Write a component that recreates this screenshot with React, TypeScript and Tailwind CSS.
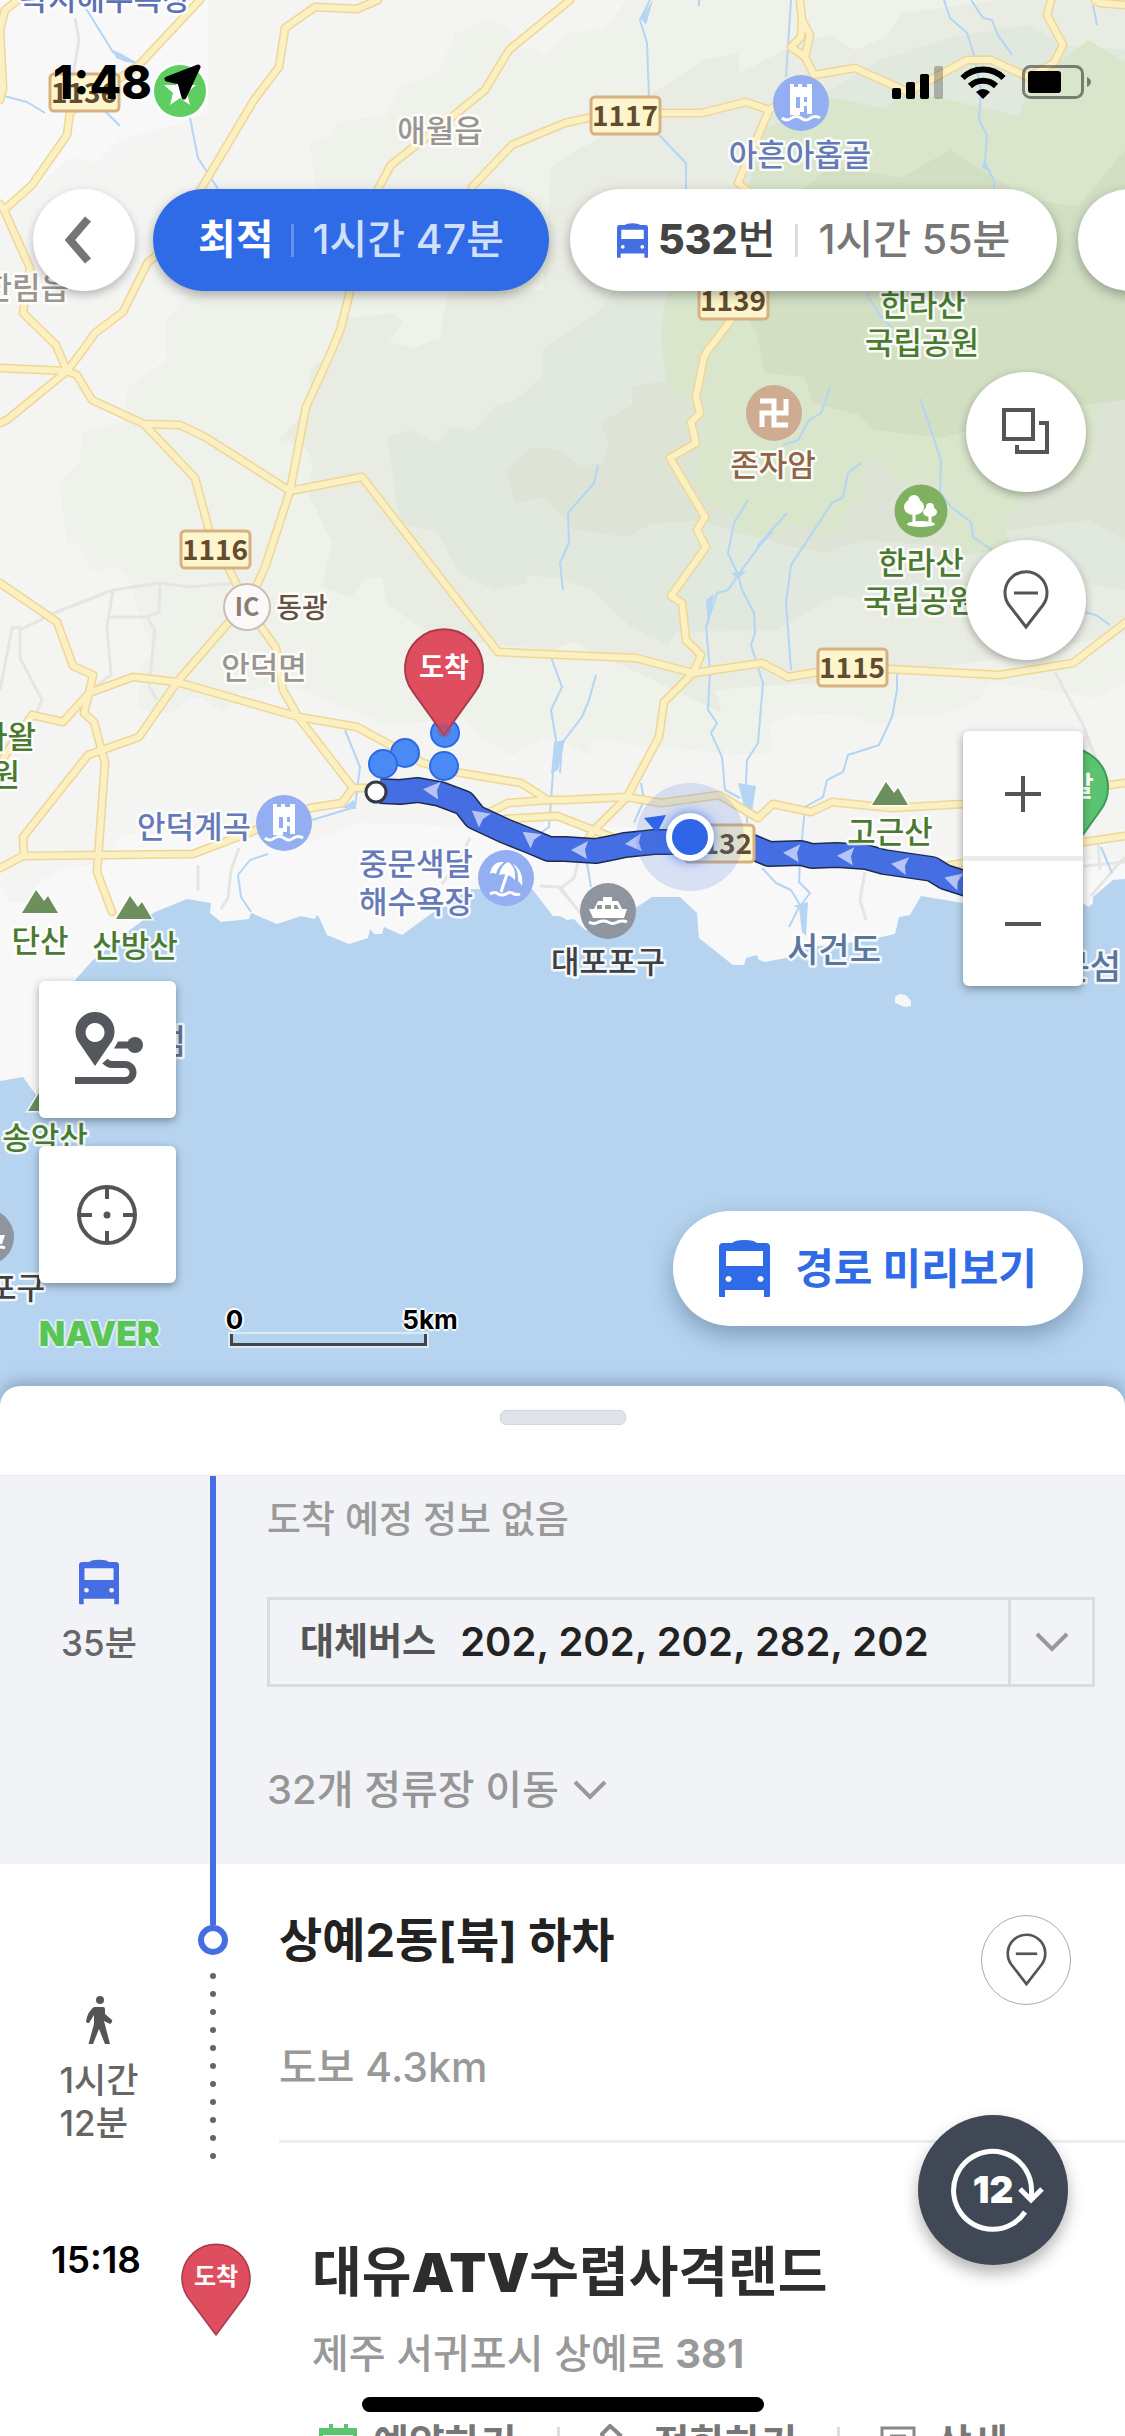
import type { ReactNode } from 'react';

const AREAS = [
    { fill: '#f4f4f2', points: '208,0 1125,0 1125,860 900,856 760,846 720,832 600,826 560,820 490,834 430,825 360,823 312,842 180,832 120,835 108,862 60,870 42,880 25,902 9,902 0,885 0,215 43,182 70,158 98,162 120,140 175,125 208,112' },
    { fill: '#eef2ea', points: '486,21 456,33 438,72 400,87 386,115 337,122 332,135 310,142 315,189 240,250 184,300 166,320 167,360 128,387 124,422 83,433 79,462 59,483 67,543 77,544 92,570 120,568 131,583 144,630 155,650 139,667 139,709 170,714 189,698 202,698 223,713 238,693 285,683 387,725 465,718 480,738 512,755 544,738 565,742 589,755 594,738 636,745 693,750 747,755 773,752 769,725 794,713 852,715 881,727 893,717 938,717 978,700 989,683 1046,690 1097,698 1125,683 1125,0 627,0 603,30 571,32 544,55 533,48 513,50 510,27' },
    { fill: '#e8ece2', points: '1000,0 902,13 886,37 855,50 830,35 800,42 740,73 738,53 704,60 650,95 596,140 560,160 551,167 543,290 447,293 440,338 414,348 389,342 404,322 393,313 335,320 340,347 310,370 310,407 279,440 303,443 312,460 310,497 332,543 322,587 351,597 366,578 382,578 388,605 436,638 551,650 574,642 632,670 722,713 715,690 776,685 823,683 1003,658 1125,633 1125,0' },
    { fill: '#e1e8dd', points: '542,350 542,377 515,400 494,407 476,430 450,427 438,443 411,430 387,437 400,523 438,533 458,573 494,590 526,583 528,575 565,580 592,590 632,628 668,645 676,632 776,630 837,595 900,606 1010,572 1125,590 1125,50 1065,45 1028,25 953,37 880,60 830,90 760,120 740,190 640,250 600,310' },
    { fill: '#dde4d5', points: '668,380 632,387 632,405 600,423 609,443 603,463 580,466 560,450 531,447 506,470 515,503 545,497 574,530 628,537 650,524 700,520 737,533 794,547 823,553 863,540 944,546 1010,530 1090,520 1125,540 1125,300 668,300' },
    { fill: '#d9e6cb', points: '1088,40 1125,62 1125,400 1100,403 1092,466 1028,490 1004,528 1012,548 960,556 944,540 950,493 920,477 900,484 874,453 859,480 866,497 848,503 843,532 819,533 794,523 773,537 740,532 728,510 708,507 693,483 706,433 704,397 668,393 661,337 665,300 690,250 749,190 758,133 828,97 884,108 910,92 938,97 1018,116 1030,84' },
    { fill: '#d2dfc3', points: '760,230 830,165 900,178 950,150 1030,200 1078,206 1125,150 1125,400 1040,410 942,438 874,430 859,415 812,403 805,377 765,373 756,330 740,310' },
];

const MINOR_ROADS = [
    'M75 18 L79 40 L73 75',
    'M0 690 L12 628 L20 627 L20 658 L42 700 L30 728 L0 748',
    'M20 630 L54 613 L113 590 L160 583 L190 587 L235 583',
    'M160 583 L159 612 L147 617 L155 630 L149 686 L157 700',
    'M113 590 L107 627 L111 675 L90 691',
    'M147 617 L110 617',
    'M198 865 V891',
    'M239 848 L231 870 L228 898 L221 909',
    'M1055 672 L1083 725 L1098 765 L1105 800',
    'M865 872 L860 900 L866 920',
    'M470 838 L460 858 L442 884',
    'M578 862 L574 878 L560 889 L585 918',
    'M540 886 L560 887 L570 900',
    'M1091 896 L1120 862 L1125 858',
    'M1084 866 L1125 862',
    'M1098 840 L1100 870',
];

const STREAMS = [
    'M85 7 L113 52 L135 63',
    'M4 96 L27 102 L45 113',
    'M190 118 L198 158 L218 189',
    'M106 112 L120 126',
    'M650 0 L640 20 L647 43 L649 97',
    'M659 135 L686 163 V189',
    'M699 0 V6',
    'M791 0 L786 77',
    'M944 0 L950 18 L967 33 L974 55 L981 90 L979 120 L987 135 L985 163 L994 180 V192',
    'M971 0 L983 18 L992 20 L998 35 L1012 55',
    'M1093 5 L1097 25',
    'M866 293 L880 315 L892 328',
    'M598 465 L594 483 L568 513 L569 542 L560 563 L563 590',
    'M830 388 L821 413 L809 420 L798 440 L783 445',
    'M920 398 L941 460 L940 492 L951 507 L971 522 L973 537 L992 550',
    'M861 463 L848 473 L843 497 L832 503 L791 565 L786 603 L791 670',
    'M748 500 L734 523 L728 553 L738 575 L728 590 L717 593 L706 627 L710 670 L708 710 L717 723 L711 733 L722 757 L725 790 L740 798',
    'M787 513 L769 533 L738 575 L742 590 L754 613 L755 633 L751 645 L763 683 L758 743 L747 760 L746 783 L747 823',
    'M897 665 L897 690 L892 717 L879 745 L848 755 L843 772 L827 780 L823 797 L805 807 L800 860 L799 882 L810 893 L801 905 L805 930',
    'M762 868 L776 883 L791 890 L800 905 L789 927',
    'M596 675 L589 700 L582 717 L562 743 L560 773',
    'M551 657 L562 687 L551 710 L556 740 L553 773 L549 827 L536 836',
    'M345 730 L360 767 L355 807 L312 820',
    'M268 854 L250 860 L238 875 L241 897 L251 912',
    'M641 783 L644 800 L634 823',
    'M587 863 L591 887',
    'M1101 847 L1112 873',
    'M1084 612 L1096 615 L1110 625',
];

const PONDS = [
    'M113 50 L122 54 L137 63 L126 62 L116 58Z',
    'M641 18 L653 0 L646 25Z',
    'M731 573 L746 571 L738 579Z',
    'M757 545 L771 530 L773 533 L757 549Z',
    'M554 742 L565 740 L558 770 L551 774Z',
    'M738 783 L756 786 L752 812 L744 806Z',
    'M342 808 L354 800 L356 809Z',
    'M793 906 L808 902 L806 936 L802 932 L799 908Z',
    'M984 160 L991 172 L982 168Z',
    'M706 600 L714 594 L708 626Z',
];

const ROADS = [
    'M200 0 L139 65 L70 112 L67 135 L32 185 L4 210 L30 268 L23 313 L56 345 L67 371',
    'M0 204 L4 210',
    'M18 0 L5 10 L0 30 L3 88 L0 100',
    'M378 0 L357 9 L315 7 L285 28 L279 67 L254 100 L201 189 L155 257 L148 262 L123 312 L95 333 L83 350 L67 371 L7 420 L0 423',
    'M0 368 L67 371 L77 375 L92 400 L144 424 L180 425 L205 437 L290 491 L362 477 L498 652 L565 655 L636 658 L693 673 L762 663 L788 677 L818 672 L888 669 L999 675 L1073 663 L1125 623',
    'M570 0 L509 50 L485 90 L452 117 L391 165 L378 189 L350 291 L341 328 L332 350 L306 407 L290 491 L265 567 L247 607',
    'M472 187 L512 145 L565 123 L592 117 L661 113 L702 113 L746 102 L769 110 L780 104',
    'M769 110 L764 122 L738 183 L760 200 L731 320 L708 350 L704 357 L696 397 L700 413 L691 422 L696 443 L670 458 L705 517 L697 530 L706 547 L671 596 L682 603 L686 640 L701 655 L693 673 L664 702 L659 737 L627 797 L592 832 L585 845',
    'M800 0 L802 20 L810 35 L805 57 L814 75 L855 68 L908 92 L967 60 L991 60 L1028 77 L1054 63 L1063 45 L1047 15 L1051 0',
    'M802 20 L801 37 L791 47 L805 57',
    'M1095 0 L1100 3 L1125 5',
    'M144 424 L195 478 L209 530 L236 583 L247 607 L276 648 L283 690 L299 718 L353 788 L372 788',
    'M353 788 L342 803 L310 808 L256 830 L193 854 L23 856 L0 868',
    'M247 607 L229 622 L177 682 L139 737 L88 755 L23 837 L24 856',
    'M0 583 L57 622 L73 666 L93 675 L89 693 L84 713 L94 722 L105 763 L97 872 L112 912',
    'M4 757 L32 715 L63 722 L89 693 L133 677 L177 682 L299 717 L357 727 L423 763 L461 773 L521 783 L548 800 L565 800 L627 797 L661 803 L719 795 L758 818 L773 804 L811 812 L832 802 L892 808 L963 804 L1125 783',
    'M490 812 L508 803 L548 800',
    'M505 819 L557 816 L614 838',
    'M940 867 L963 863 L1084 842 L1125 836',
];

const ROUTE =
    'M380 791 L400 792 L418 790 L440 794 L464 803 L475 817 L505 831 L530 841 L549 849 L565 849 L596 851 L616 847 L625 845 L654 842 L680 842 L750 846 L769 854 L801 853 L812 856 L837 855 L866 857 L884 862 L932 869 L945 877 L970 885';

const ROUTE_ARROWS: [number, number, number][] = [
    [432, 790, 5],
    [479, 816, 38],
    [530, 837, 35],
    [580, 850, 0],
    [634, 843, -6],
    [792, 853, 2],
    [846, 856, 2],
    [900, 865, 8],
    [953, 880, 16],
];

const SHIELDS: [number, number, string][] = [
    [49, 73, '1136'],
    [590, 96, '1117'],
    [698, 281, '1139'],
    [180, 530, '1116'],
    [817, 648, '1115'],
    [684, 824, '1132'],
];

const PLACES: { x: number; y: number; text: string; color: string; size?: number; end?: boolean }[] = [
    { x: 105, y: 10, text: '곽지해수욕장', color: '#5d70b3' },
    { x: 440, y: 142, text: '애월읍', color: '#999591' },
    { x: 69, y: 299, text: '한림읍', color: '#999591', end: true },
    { x: 264, y: 679, text: '안덕면', color: '#999591' },
    { x: 800, y: 166, text: '아흔아홉골', color: '#6679b8' },
    { x: 194, y: 838, text: '안덕계곡', color: '#6679b8' },
    { x: 416, y: 875, text: '중문색달', color: '#6679b8' },
    { x: 416, y: 913, text: '해수욕장', color: '#6679b8' },
    { x: 923, y: 316, text: '한라산', color: '#4a7a30' },
    { x: 922, y: 354, text: '국립공원', color: '#4a7a30' },
    { x: 921, y: 574, text: '한라산', color: '#4a7a30' },
    { x: 920, y: 612, text: '국립공원', color: '#4a7a30' },
    { x: 36, y: 748, text: '곶자왈', color: '#4a7a30', end: true },
    { x: 20, y: 786, text: '도립공원', color: '#4a7a30', end: true },
    { x: 40, y: 952, text: '단산', color: '#4a7a30' },
    { x: 135, y: 957, text: '산방산', color: '#4a7a30' },
    { x: 45, y: 1149, text: '송악산', color: '#4a7a30' },
    { x: 890, y: 843, text: '고근산', color: '#4a7a30' },
    { x: 773, y: 476, text: '존자암', color: '#8f6548' },
    { x: 302, y: 618, text: '동광', color: '#66503f', size: 28 },
    { x: 608, y: 973, text: '대포포구', color: '#3f4043' },
    { x: 45, y: 1299, text: '산이수동포구', color: '#3f4043', end: true },
    { x: 834, y: 962, text: '서건도', color: '#5c759b', size: 34 },
    { x: 1121, y: 979, text: '문섬', color: '#5c759b', size: 34, end: true },
    { x: 186, y: 1054, text: '형제섬', color: '#5c759b', size: 34, end: true },
];

const MOUNTAINS: [number, number][] = [
    [22, 890],
    [116, 896],
    [872, 782],
    [28, 1088],
];

function MapPin({ x, y, fill, stroke, label }: { x: number; y: number; fill: string; stroke: string; label: string }) {
    return (
        <g transform={`translate(${x} ${y})`}>
            <path
                d="M0 67 L-31 24 A39 39 0 1 1 31 24 Z"
                fill={fill}
                stroke={stroke}
                strokeWidth="2"
                strokeLinejoin="round"
            />
            <text y="9" textAnchor="middle" fontSize="27" fontWeight="700" fill="#fff">
                {label}
            </text>
        </g>
    );
}

function WaterfallMark({ x, y }: { x: number; y: number }) {
    return (
        <g transform={`translate(${x} ${y})`}>
            <circle r="28" fill="#94aef2" />
            <path
                d="M-11 -19 h4 v3 h4 v-3 h4 v3 h5 v-3 h5 v30 h-5 v-8 h-3 v6 h-4 v3 h-10z M-5 -6 v11 h4 v-11z M3 -6 v5 h3 v-5z"
                fill="#fff"
                fillRule="evenodd"
            />
            <path d="M-19 15 q5 4 9.500 0 q5 -3 9.500 0 q5 4 9.500 0 q5 -3 9.500 0" fill="none" stroke="#fff" strokeWidth="3" />
        </g>
    );
}

function FerryMark({ x, y }: { x: number; y: number }) {
    return (
        <g transform={`translate(${x} ${y})`}>
            <circle r="28" fill="#8e959e" />
            <path
                d="M-5 -14 h9 v4 h6 l4 8 h5 l-3 9 h-31 l-4 -9 h5 l4 -8 h5z M-11 -6 v4 h5 v-4z M-3 -6 v4 h6 v-4z M6 -6 v4 h5 l-2 -4z"
                fill="#fff"
                fillRule="evenodd"
            />
            <path d="M-19 11 q5 3 9.500 0 q5 -2 9.500 0 q5 3 9.500 0 q5 -2 9.500 0" fill="none" stroke="#fff" strokeWidth="3" />
        </g>
    );
}

function MapCanvas() {
    return (
        <svg
            className="absolute inset-x-0 top-0 h-[1436px] w-full font-['Noto_Sans_CJK_KR',sans-serif]"
            viewBox="0 0 1125 1436"
            preserveAspectRatio="xMidYMin slice"
            role="img"
            aria-label="지도"
        >
            <rect width="1125" height="1436" fill="#f8f8f8" />
            {AREAS.map((area) => (
                <polygon key={area.fill} points={area.points} fill={area.fill} />
            ))}

            {/* Sea */}
            <path
                d="M146 918 L155 912 L187 899 L211 903 L210 913 L221 922 L249 919 L251 913 L277 924 L301 916 L314 919 L318 915 L327 935 L349 944 L368 938 L370 929 L374 934 L382 934 L384 927 L402 935 L432 913 L470 889 L533 890 L553 916 L560 916 L567 920 L574 919 L585 930 L604 932 L628 913 L652 897 L680 897 L697 913 L699 938 L733 965 L744 965 L746 958 L757 955 L759 960 L765 962 L791 957 L800 948 L848 943 L881 937 L895 934 L899 917 L910 915 L921 896 L963 903 L1040 915 L1084 904 L1089 907 L1093 903 L1093 897 L1113 880 L1125 879 V1436 H0 V1081 L23 1077 L36 1095 L50 1060 L60 1010 L76 979 L92 961 L130 930 Z"
                fill="#b6d4f0"
            />
            <path d="M895 997 L899 994 L906 995 L911 1001 L911 1006 L905 1007 L895 1003Z" fill="#f5f6f6" />

            <g fill="none" stroke="#e5e5e3" strokeWidth="3" strokeLinejoin="round">
                {MINOR_ROADS.map((d) => (
                    <path key={d} d={d} />
                ))}
            </g>
            <g fill="none" stroke="#b4d5f3" strokeWidth="2" strokeLinejoin="round">
                {STREAMS.map((d) => (
                    <path key={d} d={d} />
                ))}
            </g>
            <g fill="#b4d5f3">
                {PONDS.map((d) => (
                    <path key={d} d={d} />
                ))}
            </g>
            <g fill="none" stroke="#f0d696" strokeWidth="9" strokeLinejoin="round" strokeLinecap="round">
                {ROADS.map((d) => (
                    <path key={d} d={d} />
                ))}
            </g>
            <g fill="none" stroke="#fbf0c1" strokeWidth="6" strokeLinejoin="round" strokeLinecap="round">
                {ROADS.map((d) => (
                    <path key={d} d={d} />
                ))}
            </g>

            {/* Bus route */}
            <g fill="none" strokeLinejoin="round">
                <path d={ROUTE} stroke="#1d2a52" strokeWidth="26" />
                <path d={ROUTE} stroke="#456ee2" strokeWidth="23" />
            </g>
            {ROUTE_ARROWS.map(([x, y, angle]) => (
                <path
                    key={x}
                    d="M-9 0 L8 -9 L5 0 L7 9 Z"
                    transform={`translate(${x} ${y}) rotate(${angle})`}
                    fill="#b5c4f5"
                />
            ))}

            {/* Road numbers */}
            {SHIELDS.map(([x, y, name]) => (
                <g key={name}>
                    <rect x={x + 1} y={y + 1} width="69" height="37" rx="4" fill="#fdf5cb" stroke="#d8b180" strokeWidth="3" />
                    <text x={x + 35} y={y + 30} textAnchor="middle" fontSize="28" fontWeight="700" fill="#624b2f">
                        {name}
                    </text>
                </g>
            ))}

            {/* Interchange */}
            <circle cx="247" cy="607" r="23" fill="#fbf9f8" stroke="#c9bdba" strokeWidth="2" />
            <text x="247" y="616" textAnchor="middle" fontSize="25" fontWeight="700" fill="#8d7c73">
                IC
            </text>

            {/* Place names */}
            <g stroke="#fff" strokeOpacity="0.85" strokeWidth="5" strokeLinejoin="round" fontWeight="500" paintOrder="stroke">
                {PLACES.map((place) => (
                    <text
                        key={`${place.text}-${place.y}`}
                        x={place.x}
                        y={place.y}
                        fontSize={place.size ?? 31}
                        fill={place.color}
                        textAnchor={place.end ? 'end' : 'middle'}
                    >
                        {place.text}
                    </text>
                ))}
            </g>
            {MOUNTAINS.map(([x, y]) => (
                <path
                    key={x}
                    d="M0 23 L14 0 L22 11 L26 6 L36 23 Z"
                    transform={`translate(${x} ${y})`}
                    fill="#6c8f5d"
                    stroke="#fff"
                    strokeWidth="3"
                    strokeOpacity="0.8"
                    paintOrder="stroke"
                />
            ))}

            {/* Sights */}
            <WaterfallMark x={801} y={103} />
            <WaterfallMark x={284} y={823} />
            <FerryMark x={608} y={911} />
            <FerryMark x={-14} y={1237} />
            <g transform="translate(506 878)">
                <circle r="28" fill="#94aef2" />
                <path d="M-16 -4 Q-14 -17 -2 -16 Q-9 -10 -10 -4 Q-13 -6 -16 -4Z M-7 -3 Q-5 -13 2 -16 Q10 -12 9 2 Q1 -6 -7 -3Z M6 -15 Q18 -8 16 8 Q14 4 12 3 Q13 -8 6 -15Z" fill="#fff" />
                <path d="M1 -4 L-5 14 M-16 16 q5 -3 8 0 q4 2 8 0 q4 -3 8 0 q4 1 6 0" fill="none" stroke="#fff" strokeWidth="3" />
            </g>
            <g transform="translate(774 413)">
                <circle r="28" fill="#cfab91" />
                <path d="M-14 -12 H0 V12 H14 M12 -14 V0 H-12 V14" fill="none" stroke="#fff" strokeWidth="5" />
            </g>
            <g transform="translate(921 511)">
                <circle r="26.500" fill="#80b160" />
                <ellipse cx="-7" cy="-4" rx="10" ry="8" fill="#fff" />
                <circle cx="-7" cy="-10" r="6" fill="#fff" />
                <ellipse cx="9" cy="1" rx="7" ry="5" fill="#fff" />
                <circle cx="9" cy="-4" r="4" fill="#fff" />
                <path d="M-7 2 V13 M9 4 V13" stroke="#fff" strokeWidth="3" />
                <ellipse cy="13" rx="14" ry="3" fill="#fff" />
            </g>
            <g transform="translate(180 91)">
                <circle r="28" fill="#fff" />
                <circle r="26" fill="#5fce62" />
                <path d="M0 -17 L4 -6 L16 -6 L7 2 L10 14 L0 7 L-10 14 L-7 2 L-16 -6 L-4 -6 Z" fill="#fff" />
            </g>

            {/* Stops, start and arrival */}
            <g fill="#4a8af5" stroke="#2d68e6" strokeWidth="2">
                <circle cx="405" cy="753" r="14" />
                <circle cx="383" cy="764" r="14" />
                <circle cx="444" cy="766" r="14" />
                <circle cx="445" cy="733" r="14" />
            </g>
            <circle cx="376" cy="792" r="10" fill="#fff" stroke="#333a45" strokeWidth="3" />
            <MapPin x={444} y={668} fill="#df4e5f" stroke="#a93a4a" label="도착" />
            <circle cx="444" cy="730" r="7" fill="#a0507f" fillOpacity="0.6" />
            <MapPin x={1069} y={787} fill="#5bc371" stroke="#3f9c58" label="출발" />

            {/* Current position */}
            <circle cx="690" cy="837" r="54" fill="#4a74e0" fillOpacity="0.18" />
            <path d="M644 818 L666 815 L657 833 Z" fill="#2f66e8" />
            <circle cx="690" cy="837" r="24" fill="#fff" className="drop-shadow-[0_0_6px_rgba(47,102,232,0.8)]" />
            <circle cx="690" cy="837" r="18" fill="#2f66e8" />
        </svg>
    );
}

function BusIcon({ className }: { className: string }) {
    return (
        <svg viewBox="0 0 51 57" className={className} fill="currentColor" aria-hidden="true">
            <path
                fillRule="evenodd"
                d="M4 3 H13 Q16 0 25.500 0 T38 3 H47 Q51 3 51 7 V56 Q51 57 50 57 H45 V50 H6 V57 H1 Q0 57 0 56 V7 Q0 3 4 3Z M7 11 V26 H44 V11Z M9.500 36 a3 3 0 1 0 .1 0Z M41.500 36 a3 3 0 1 0 .1 0Z"
            />
        </svg>
    );
}

function PinMinusIcon({ className }: { className: string }) {
    return (
        <svg viewBox="0 0 46 60" className={className} fill="none" stroke="#555" strokeWidth="3" aria-hidden="true">
            <path d="M23 57 L6 35 A21 21 0 1 1 40 35 Z" />
            <path d="M11 23 H35" />
        </svg>
    );
}

function ChevronDown() {
    return (
        <svg viewBox="0 0 34 20" className="h-5 w-[34px]" fill="none" stroke="#999" strokeWidth="4" aria-hidden="true">
            <path d="M2 2 L17 17 L32 2" />
        </svg>
    );
}

function StatusBar() {
    return (
        <div className="flex h-[164px] items-center justify-between pr-[34px] pl-[53px]">
            <div className="flex items-center gap-3">
                <span className="text-[46px] leading-none font-extrabold text-black">1:48</span>
                <svg viewBox="0 0 37 36" className="h-9 w-[37px]" aria-hidden="true">
                    <path d="M34 3 L3 15 L16 18 L20 33 Z" stroke="#000" strokeWidth="5" strokeLinejoin="round" />
                </svg>
            </div>
            <div className="flex items-center gap-4">
                <svg viewBox="0 0 52 33" className="h-[33px] w-[52px]" aria-hidden="true">
                    <rect y="22" width="9" height="11" rx="2" />
                    <rect x="14" y="16" width="9" height="17" rx="2" />
                    <rect x="28" y="8" width="9" height="25" rx="2" />
                    <rect x="42" width="9" height="33" rx="2" fillOpacity="0.25" />
                </svg>
                <svg viewBox="0 0 46 33" className="h-[33px] w-[46px]" fill="none" stroke="#000" strokeWidth="6" aria-hidden="true">
                    <path d="M2.500 12 A29 29 0 0 1 43.500 12" />
                    <path d="M10 20 A18.500 18.500 0 0 1 36 20" />
                    <path d="M16 26 Q23 20 30 26 L23 33Z" fill="#000" stroke="none" />
                </svg>
                <svg viewBox="0 0 69 34" className="h-[34px] w-[69px]" aria-hidden="true">
                    <rect x="1.500" y="1.500" width="59" height="31" rx="7" fill="none" stroke="#000" strokeOpacity="0.45" strokeWidth="3" />
                    <rect x="6" y="6" width="33" height="22" rx="3" />
                    <path d="M65 12 Q69 14 69 17 T65 22Z" fillOpacity="0.45" />
                </svg>
            </div>
        </div>
    );
}

function RouteTabs() {
    return (
        <nav className="mt-[25px] flex pl-[33px]">
            <button
                type="button"
                aria-label="뒤로"
                className="mr-[18px] flex size-[102px] shrink-0 items-center justify-center rounded-full bg-white shadow-[0_4px_10px_rgba(0,0,0,0.25)]"
            >
                <svg viewBox="0 0 28 48" className="mr-3 h-12 w-7" fill="none" stroke="#757575" strokeWidth="8">
                    <path d="M24 3 L6 24 L24 45" />
                </svg>
            </button>
            <button
                type="button"
                className="mr-[21px] flex h-[102px] shrink-0 items-center gap-[18px] rounded-full bg-[#2f6ae7] px-[45px] text-[41px] shadow-[0_4px_12px_rgba(0,0,0,0.3)]"
            >
                <span className="font-bold text-white">최적</span>
                <span className="h-[33px] w-[3px] bg-[#6391ee]" />
                <span className="font-medium text-[#d0dffa]">1시간 47분</span>
            </button>
            <button
                type="button"
                className="mr-[21px] flex h-[102px] shrink-0 items-center gap-[20px] rounded-full bg-white px-[47px] text-[41px] shadow-[0_4px_12px_rgba(0,0,0,0.3)]"
            >
                <span className="flex items-center gap-2.5 font-extrabold text-[#444]">
                    <BusIcon className="h-[35px] w-[31px] text-[#456ee2]" />
                    <span>
                        532<span className="font-medium">번</span>
                    </span>
                </span>
                <span className="h-[33px] w-[3px] bg-[#ddd]" />
                <span className="font-medium text-[#777]">1시간 55분</span>
            </button>
            <button
                type="button"
                aria-label="다음 경로"
                className="h-[102px] w-[400px] shrink-0 rounded-full bg-white shadow-[0_4px_12px_rgba(0,0,0,0.3)]"
            />
        </nav>
    );
}

function SquareButton({ label, children }: { label: string; children: ReactNode }) {
    return (
        <button
            type="button"
            aria-label={label}
            className="size-[137px] rounded-md bg-white shadow-[0_3px_8px_rgba(0,0,0,0.35)]"
        >
            {children}
        </button>
    );
}

function MapControls() {
    return (
        <div className="flex flex-1 justify-between">
            <div className="flex flex-col justify-end pb-10 pl-[39px]">
                <div className="flex flex-col gap-7">
                    <SquareButton label="경로">
                        <svg viewBox="0 0 137 137" fill="none" stroke="#54575c" strokeWidth="7">
                            <path
                                d="M56 85 L41 63 A19.500 19.500 0 1 1 71 63 Z M56 42 a9.500 9.500 0 1 0 .1 0Z"
                                fill="#54575c"
                                fillRule="evenodd"
                                stroke="none"
                            />
                            <circle cx="96" cy="64" r="8" fill="#54575c" stroke="none" />
                            <path d="M90 60.500 H79 L75 67.500 H90Z" fill="#54575c" stroke="none" />
                            <path d="M66 80 Q69 83.500 73 83.500 H86 A8 8 0 0 1 86 99.500 H36" />
                        </svg>
                    </SquareButton>
                    <SquareButton label="현재 위치">
                        <svg viewBox="0 0 137 137" fill="none" stroke="#555" strokeWidth="4">
                            <circle cx="68" cy="69" r="28" />
                            <path d="M68 41 V53 M68 85 V97 M40 69 H53 M84 69 H97" />
                            <circle cx="68" cy="69" r="3.500" fill="#555" stroke="none" />
                        </svg>
                    </SquareButton>
                </div>
                <div className="mt-[23px] flex items-end gap-[66px]">
                    <span className="text-[34px] leading-6 font-black text-[#59c653] [text-shadow:2px_0_0_#dcecf7,-2px_0_0_#dcecf7,0_2px_0_#dcecf7,0_-2px_0_#dcecf7]">
                        NAVER
                    </span>
                    <div>
                        <div className="flex w-[232px] justify-between text-[26px] leading-[28px] font-bold text-black [text-shadow:2px_0_1px_#fff,-2px_0_1px_#fff,0_2px_1px_#fff,0_-2px_1px_#fff]">
                            <span>0</span>
                            <span>5km</span>
                        </div>
                        <div className="ml-1 h-3 w-[197px] border-x-[3px] border-b-[3px] border-[#444] outline-2 outline-white/50" />
                    </div>
                </div>
            </div>

            <div className="flex flex-col items-end pt-[81px]">
                <div className="mr-[39px] flex flex-col gap-12">
                    <button type="button" aria-label="지도 유형" className="size-[120px] rounded-full bg-white shadow-[0_3px_8px_rgba(0,0,0,0.3)]">
                        <svg viewBox="0 0 120 120" fill="none" stroke="#555" strokeWidth="4">
                            <rect x="38" y="38" width="29" height="29" />
                            <path d="M73 51 H81 V80 H51 V73" />
                        </svg>
                    </button>
                    <button
                        type="button"
                        aria-label="거리뷰"
                        className="flex size-[120px] items-center justify-center rounded-full bg-white shadow-[0_3px_8px_rgba(0,0,0,0.3)]"
                    >
                        <PinMinusIcon className="h-[60px] w-[46px]" />
                    </button>
                </div>
                <div className="mt-[71px] mr-[42px] flex w-[120px] flex-col rounded-md bg-white shadow-[0_3px_8px_rgba(0,0,0,0.35)]">
                    <button type="button" aria-label="확대" className="flex h-[125px] items-center justify-center">
                        <svg viewBox="0 0 36 36" className="size-9" stroke="#555" strokeWidth="4">
                            <path d="M18 0 V36 M0 18 H36" />
                        </svg>
                    </button>
                    <div className="h-[5px] bg-[#ececec]" />
                    <button type="button" aria-label="축소" className="flex h-[125px] items-center justify-center">
                        <svg viewBox="0 0 36 36" className="size-9" stroke="#555" strokeWidth="4">
                            <path d="M0 18 H36" />
                        </svg>
                    </button>
                </div>
                <button
                    type="button"
                    className="mt-auto mr-[42px] mb-[60px] flex h-[115px] items-center gap-[25px] rounded-full bg-white px-[46px] text-[42px] font-bold text-[#2f6ae7] shadow-[0_10px_24px_rgba(60,90,120,0.45)]"
                >
                    <BusIcon className="h-[57px] w-[51px]" />
                    경로 미리보기
                </button>
            </div>
        </div>
    );
}

function BusStep() {
    return (
        <li className="flex border-t border-[#e6e7ea] bg-[#f1f3f7]">
            <div className="flex w-[198px] flex-col items-center pt-[83px] text-[35px] leading-[44px] font-medium text-[#666]">
                <BusIcon className="mb-[16px] h-[46px] w-10 text-[#456ee2]" />
                35분
            </div>
            <div className="flex w-[30px] justify-center">
                <div className="w-1.5 bg-[#456ee2]" />
            </div>
            <div className="mr-[30px] ml-[39px] flex-1 pt-[17px] pb-11">
                <p className="text-[37px] leading-[54px] font-medium text-[#9a9a9a]">도착 예정 정보 없음</p>
                <button type="button" className="mt-[50px] flex h-[90px] w-full items-stretch border-[3px] border-[#d9dbe0] text-left">
                    <span className="flex flex-1 items-center gap-[24px] pl-[30px]">
                        <span className="text-[37px] font-bold text-[#555]">대체버스</span>
                        <span className="text-[40px] font-semibold text-[#222]">202, 202, 202, 282, 202</span>
                    </span>
                    <span className="flex w-[84px] items-center justify-center border-l-[3px] border-[#d9dbe0]">
                        <ChevronDown />
                    </span>
                </button>
                <button type="button" className="mt-[73px] flex items-center gap-[14px] text-[40px] leading-[60px] font-medium text-[#969696]">
                    32개 정류장 이동
                    <ChevronDown />
                </button>
            </div>
        </li>
    );
}

function WalkStep() {
    return (
        <li className="flex">
            <div className="flex w-[198px] flex-col items-center pt-[132px] text-[35px] leading-[43px] font-medium text-[#666]">
                <svg viewBox="0 0 28 48" className="mb-[15px] h-12 w-7" fill="#555" aria-hidden="true">
                    <circle cx="15" cy="4" r="4" />
                    <path d="M9 11 H18 Q20 11 20 13 V18 L27 24 Q28 26 25 28 L19 25 L25 48 H20 L14 33 L8 48 H3.500 L9 28 V19 L4 27 Q1 27 1 25 Q3 15 9 11Z" />
                </svg>
                <p>
                    1시간
                    <br />
                    12분
                </p>
            </div>
            <div className="flex w-[30px] flex-col items-center">
                <div className="h-[61px] w-1.5 bg-[#456ee2]" />
                <div className="size-[30px] rounded-full border-[6px] border-[#456ee2] bg-white" />
                <div className="mt-[18px] flex flex-col gap-3">
                    {Array.from({ length: 11 }, (_, i) => (
                        <span key={i} className="size-1.5 rounded-full bg-[#666]" />
                    ))}
                </div>
            </div>
            <div className="ml-[51px] flex-1">
                <div className="flex justify-between">
                    <div className="pt-[46px]">
                        <h2 className="text-[47px] leading-[60px] font-bold text-[#222]">상예2동[북] 하차</h2>
                        <p className="mt-[69px] text-[41px] leading-[56px] font-medium text-[#999]">도보 4.3km</p>
                    </div>
                    <button
                        type="button"
                        aria-label="거리뷰"
                        className="mt-[51px] mr-[54px] flex size-[90px] items-center justify-center rounded-full border border-[#aaa]"
                    >
                        <PinMinusIcon className="h-[54px] w-[41px]" />
                    </button>
                </div>
                <div className="mt-[45px] h-[3px] bg-[#eee]" />
            </div>
        </li>
    );
}

function ArrivalStep() {
    return (
        <li className="flex">
            <time className="w-[181px] pt-[77px] pl-[51px] text-[37px] leading-[48px] font-semibold text-black">15:18</time>
            <svg viewBox="0 0 70 94" className="mt-[83px] h-[94px] w-[70px]">
                <path
                    d="M35 93 L6 54 A34 34 0 1 1 64 54 Z"
                    fill="#df4e5f"
                    stroke="#a93a4a"
                    strokeWidth="1.500"
                    strokeLinejoin="round"
                />
                <text x="35" y="43" textAnchor="middle" fontSize="24" fontWeight="700" fill="#fff">
                    도착
                </text>
            </svg>
            <div className="ml-[61px] pt-[81px]">
                <h2 className="text-[54px] leading-[66px] font-bold text-[#2d2d2d]">
                    대유<span className="font-black">ATV</span>수렵사격랜드
                </h2>
                <p className="mt-6 text-[40px] leading-[48px] font-medium text-[#999]">
                    제주 서귀포시 상예로 <span className="font-bold">381</span>
                </p>
                <div className="mt-[41px] flex items-center pl-[7px] text-[39px] leading-[48px] font-bold whitespace-nowrap text-[#777]">
                    <a href="#reserve" className="flex items-center gap-4">
                        <svg viewBox="0 0 38 38" className="size-[38px]" fill="none" stroke="#5ac46e" strokeWidth="4" aria-hidden="true">
                            <path d="M2 6 H36 V36 H2Z M2 9 H36 M12 0 V6 M27 0 V6" />
                        </svg>
                        예약하기
                    </a>
                    <span className="mx-10 h-8 w-[3px] bg-[#ddd]" />
                    <a href="#call" className="flex items-center gap-4">
                        <svg viewBox="0 0 38 38" className="size-[38px]" fill="none" stroke="#888" strokeWidth="4" aria-hidden="true">
                            <path d="M10 2 L20 11 L15 17 Q18 23 22 24 L28 19 L36 28 L30 35 Q10 34 2 10 Z" />
                        </svg>
                        전화하기
                    </a>
                    <span className="mx-10 h-8 w-[3px] bg-[#ddd]" />
                    <a href="#detail" className="flex items-center gap-5">
                        <svg viewBox="0 0 36 38" className="h-[38px] w-9" fill="none" stroke="#888" strokeWidth="3" aria-hidden="true">
                            <path d="M2 4 H34 V36 H2Z M10 12 H26 M10 20 H26 M10 28 H20" />
                        </svg>
                        상세
                    </a>
                </div>
            </div>
        </li>
    );
}

export default function App() {
    return (
        <main className="relative flex h-screen flex-col overflow-hidden bg-white font-['Inter','Noto_Sans_CJK_KR',sans-serif]">
            <section className="relative flex flex-1 flex-col">
                <MapCanvas />
                <div className="relative flex flex-1 flex-col">
                    <StatusBar />
                    <RouteTabs />
                    <MapControls />
                </div>
            </section>

            {/* Bottom sheet, its last row runs off the screen */}
            <section className="relative -mb-[31px] shrink-0 rounded-t-[20px] bg-white shadow-[0_-4px_16px_rgba(60,90,120,0.4)]">
                <div className="flex h-[89px] justify-center pt-6">
                    <div className="h-[15px] w-[126px] rounded-md border border-[#d0d4dd] bg-[#dfe3ec]" />
                </div>
                <ol>
                    <BusStep />
                    <WalkStep />
                    <ArrivalStep />
                </ol>
            </section>

            {/* Refresh countdown */}
            <button
                type="button"
                aria-label="새로고침"
                className="absolute right-[57px] bottom-[171px] size-[150px] rounded-full bg-[#3f4854] shadow-[0_8px_16px_rgba(0,0,0,0.3)]"
            >
                <svg viewBox="0 0 150 150" fill="none" stroke="#fff" strokeWidth="5">
                    <path d="M107 97 A39 39 0 1 1 113 82" />
                    <path d="M102 74 L113 85 L124 74" />
                    <text x="75" y="88" textAnchor="middle" fontSize="37" fontWeight="900" fill="#fff" stroke="none">
                        12
                    </text>
                </svg>
            </button>

            <div className="absolute bottom-6 left-1/2 h-[15px] w-[402px] -translate-x-1/2 rounded-full bg-black" />
        </main>
    );
}
